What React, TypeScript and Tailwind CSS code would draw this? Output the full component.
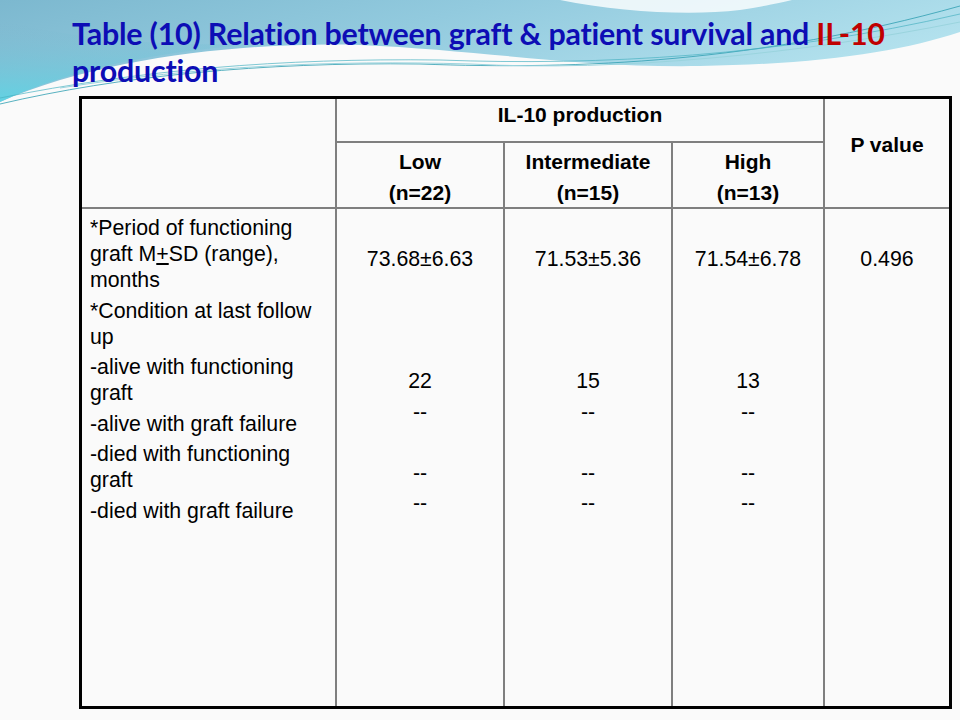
import React from "react";

const headCell = "border-[#7f7f7f] text-center font-bold text-[21px] leading-[31px] text-black";

function Wave() {
  return (
    <svg
      className="absolute left-0 top-0"
      width="960"
      height="120"
      viewBox="0 0 960 120"
    >
      <defs>
        <linearGradient id="sky" x1="0" y1="0" x2="1" y2="0.4">
          <stop offset="0" stopColor="#7cb8cf" />
          <stop offset="0.45" stopColor="#92cade" />
          <stop offset="1" stopColor="#b4e2ee" />
        </linearGradient>
        <linearGradient id="cyan" x1="0" y1="0" x2="0" y2="1">
          <stop offset="0" stopColor="#7fb6cd" stopOpacity="0" />
          <stop offset="1" stopColor="#5cd4e4" stopOpacity="0.9" />
        </linearGradient>
      </defs>
      <path
        d="M0,0 H960 V32 C900,52 820,64 700,66 C580,68 480,50 360,45 C260,42 110,54 0,102 Z"
        fill="url(#sky)"
      />
      <path
        d="M0,20 C80,40 160,46 260,44 C150,52 70,70 0,102 Z"
        fill="url(#cyan)"
      />
      <path
        d="M560,0 C620,12 690,16 740,10 C765,6 780,3 792,0 Z"
        fill="#ffffff"
        fillOpacity="0.8"
      />
      <path
        d="M0,104 C120,76 260,62 420,64 C580,70 760,62 960,6"
        fill="none"
        stroke="#2f9fb2"
        strokeWidth="1"
        strokeOpacity="0.8"
      />
      <path
        d="M0,98 C140,70 280,58 440,60 C600,66 780,56 960,14"
        fill="none"
        stroke="#4ab2c2"
        strokeWidth="1"
        strokeOpacity="0.7"
      />
      <path
        d="M60,88 C200,66 330,60 470,64 C620,72 800,54 960,22"
        fill="none"
        stroke="#9ad4de"
        strokeWidth="1"
      />
    </svg>
  );
}

export default function App() {
  const cols = [
    { mean: "73.68±6.63", n: "22" },
    { mean: "71.53±5.36", n: "15" },
    { mean: "71.54±6.78", n: "13" },
  ];
  return (
    <div className="relative w-[960px] h-[720px] overflow-hidden bg-[#fafafa] font-['Liberation_Sans',Arial,sans-serif]">
      <Wave />
      <div className="relative">
        <h1 className="pl-[72px] pt-[15px] text-[30.4px] leading-[37px] font-bold text-[#0d0db5] font-['Lato','Liberation_Sans',sans-serif] tracking-[-0.2px]">
          Table (10) Relation between graft &amp; patient survival and{" "}
          <span className="text-[#c00000]">IL-10</span>
          <br />
          production
        </h1>

        <div className="ml-[79px] mt-[7px] w-[873px] border-[3px] border-black">
          <div className="grid grid-cols-[255px_168px_168px_152px_124px] grid-rows-[44px_66px_497px]">
            <div className="row-span-2 border-r-2 border-b-2 border-[#7f7f7f]" />
            <div className={`col-span-3 border-r-2 border-b-2 pt-0 ${headCell}`}>
              IL-10 production
            </div>
            <div className={`row-span-2 border-b-2 pt-[30px] ${headCell}`}>
              P value
            </div>
            <div className={`border-r-2 border-b-2 pt-[3px] ${headCell}`}>
              Low
              <br />
              (n=22)
            </div>
            <div className={`border-r-2 border-b-2 pt-[3px] ${headCell}`}>
              Intermediate
              <br />
              (n=15)
            </div>
            <div className={`border-r-2 border-b-2 pt-[3px] ${headCell}`}>
              High
              <br />
              (n=13)
            </div>

            <div className="border-r-2 border-[#7f7f7f] pl-[8px] pt-[6px] text-[21.3px] leading-[26px] text-black flex flex-col gap-[4.5px]">
              <p>
                *Period of functioning
                <br />
                graft M<span className="underline">+</span>SD (range),
                <br />
                months
              </p>
              <p>
                *Condition at last follow
                <br />
                up
              </p>
              <p>
                -alive with functioning
                <br />
                graft
              </p>
              <p>-alive with graft failure</p>
              <p>
                -died with functioning
                <br />
                graft
              </p>
              <p>-died with graft failure</p>
            </div>

            {cols.map((c) => (
              <div
                key={c.mean}
                className="border-r-2 border-[#7f7f7f] pt-[4px] text-center text-[21.3px] leading-[30.6px] text-black"
              >
                <div>&nbsp;</div>
                <div>{c.mean}</div>
                <div>&nbsp;</div>
                <div>&nbsp;</div>
                <div>&nbsp;</div>
                <div>{c.n}</div>
                <div>--</div>
                <div>&nbsp;</div>
                <div>--</div>
                <div>--</div>
              </div>
            ))}

            <div className="pt-[4px] text-center text-[21.3px] leading-[30.6px] text-black">
              <div>&nbsp;</div>
              <div>0.496</div>
            </div>
          </div>
        </div>
      </div>
    </div>
  );
}
